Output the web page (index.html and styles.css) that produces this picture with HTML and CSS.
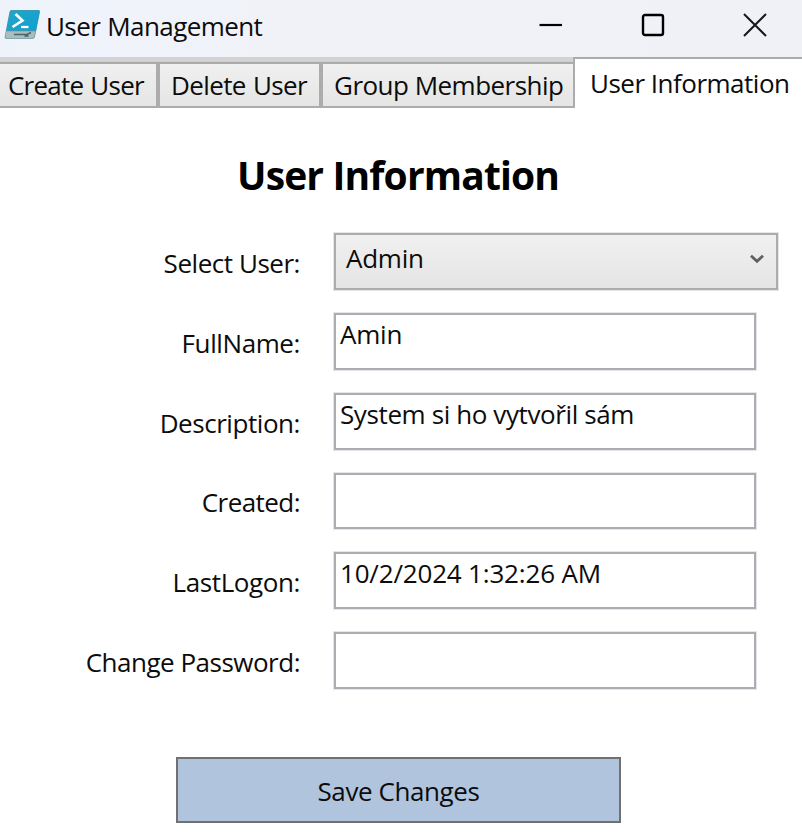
FILE: index.html
```
<!DOCTYPE html>
<html lang="en">
<head>
<meta charset="utf-8">
<title>User Management</title>
<link rel="stylesheet" href="styles.css">
</head>
<body>
<div class="window">
  <header class="titlebar">
    <svg class="app-icon" width="38" height="32" viewBox="0 0 38 32">
      <defs>
        <linearGradient id="screen" x1="0" y1="0" x2="1" y2="1">
          <stop offset="0" stop-color="#22a6c8"/>
          <stop offset="1" stop-color="#0fa0d2"/>
        </linearGradient>
      </defs>
      <path d="M7.5 1H34.5Q36.3 1 36 2.8L31 27.5Q30.5 29.8 28.5 29.8H2.3Q.3 29.8 .7 27.8L5.5 2.8Q5.8 1 7.5 1Z" fill="#5f9097"/>
      <path d="M7.7 1.5H34.4Q35.8 1.5 35.5 3L32 21.5H2.500L6 3Q6.300 1.500 7.700 1.500Z" fill="url(#screen)"/>
      <path d="M2.300 22.300H31.500L30.500 27Q30 29 28.200 29H2.800Q1 29 1.300 27.300Z" fill="#a9bcbf"/>
      <path d="M11.500 5L18.500 11.500L8.500 18" fill="none" stroke="#fff" stroke-width="2.600"/>
      <path d="M17 18H24.500" stroke="#fff" stroke-width="2.300"/>
      <path d="M10 25.500H23L27 23.500M20.500 26.800H24.500" fill="none" stroke="#4e6468" stroke-width="1.700"/>
    </svg>
    <h1 class="caption">User Management</h1>
    <div class="controls">
      <svg width="24" height="24" viewBox="0 0 24 24"><path d="M.5 12H23" stroke="#000" stroke-width="2.200"/></svg>
      <svg width="24" height="24" viewBox="0 0 24 24"><rect x="2" y="2" width="20" height="20" rx="2" fill="none" stroke="#000" stroke-width="2.400"/></svg>
      <svg width="24" height="24" viewBox="0 0 24 24"><path d="M1 1L23 23M23 1L1 23" stroke="#16161c" stroke-width="2"/></svg>
    </div>
  </header>
  <nav class="tabs">
    <div class="tab create">Create User</div>
    <div class="tab delete">Delete User</div>
    <div class="tab group">Group Membership</div>
    <div class="tab active">User Information</div>
  </nav>
  <main class="panel">
    <h2 class="heading">User Information</h2>
    <form class="form">
      <div class="row">
        <span class="label select-label">Select User:</span>
        <div class="combo"><span class="admin">Admin</span>
          <svg width="16" height="12" viewBox="0 0 16 12"><path d="M2 2.700L8 8.300L14 2.700" fill="none" stroke="#606060" stroke-width="2.800"/></svg>
        </div>
      </div>
      <div class="row">
        <span class="label fullname">FullName:</span>
        <div class="box amin">Amin</div>
      </div>
      <div class="row">
        <span class="label description">Description:</span>
        <div class="box system">System si ho vytvořil sám</div>
      </div>
      <div class="row short">
        <span class="label created">Created:</span>
        <div class="box"></div>
      </div>
      <div class="row">
        <span class="label lastlogon">LastLogon:</span>
        <div class="box date">10/2/2024 1:32:26 AM</div>
      </div>
      <div class="row">
        <span class="label password">Change Password:</span>
        <div class="box"></div>
      </div>
    </form>
    <div class="save">Save Changes</div>
  </main>
</div>
</body>
</html>
```
FILE: styles.css
```
* { box-sizing: border-box; }
body {
  margin: 0;
  background: #fff;
  color: #0c0c0c;
  font: 26px/36px "Open Sans", "Noto Sans", sans-serif;
  white-space: nowrap;
}
.window { width: 802px; height: 840px; overflow: hidden; display: flex; flex-direction: column; }
.titlebar {
  height: 57px;
  display: flex;
  align-items: flex-start;
  background: linear-gradient(90deg, #eef3fb, #f1f2f8 40%, #f0f1f7);
}
.app-icon { margin: 9px 0 0 4px; }
.caption { margin: 8px 0 0 4px; font-size: 26px; font-weight: 400; letter-spacing: -.6px; word-spacing: 1px; }
.controls { margin: 13px 35px 0 auto; width: 228px; display: flex; justify-content: space-between; }
.controls svg:nth-child(2) { margin-right: 1px; }
.tabs { height: 51px; display: flex; align-items: flex-end; background: linear-gradient(#d3d3d3 4px, #c8c8c8 5px); }
.tab {
  height: 46px;
  padding-top: 3px;
  border: 2px solid #acacac;
  background: linear-gradient(#f0f0f0, #e5e5e5);
}
.create { width: 158px; padding-left: 8px; border-left: 0; letter-spacing: -.76px; word-spacing: 1px; }
.delete { width: 163px; padding-left: 11px; letter-spacing: -.62px; word-spacing: 1px; }
.group { width: 252px; padding-left: 11px; border-right: 0; letter-spacing: -.52px; }
.active {
  flex: 1;
  height: 51px;
  padding: 6px 0 0 15px;
  border-right: 0;
  border-bottom: 0;
  background: #fff;
  letter-spacing: -.5px;
}
.panel { flex: 1; }
.heading {
  margin: 41px 0 0 237px;
  font-size: 39px;
  line-height: 52px;
  letter-spacing: -.85px;
  color: #000;
}
.form { display: grid; gap: 23px; margin: 32px 0 0; }
.row { display: flex; height: 57px; }
.row.short { height: 56px; }
.label { width: 300px; margin-right: 34px; padding-top: 12px; text-align: right; }
.select-label { letter-spacing: -.46px; }
.fullname { letter-spacing: -.4px; }
.description { letter-spacing: -.44px; }
.created { padding-top: 11px; letter-spacing: -.55px; }
.lastlogon { letter-spacing: -.4px; }
.password { letter-spacing: -.49px; }
.combo, .box { border: 2px solid #acacac; box-shadow: 0 0 0 1px #e6e6e8; }
.combo {
  width: 444px;
  display: flex;
  justify-content: space-between;
  padding: 5px 11px 0 10px;
  background: linear-gradient(#f0f0f0, #e5e5e5);
}
.combo svg { margin-top: 13px; }
.admin { letter-spacing: -.25px; }
.box { width: 422px; padding: 1px 0 0 4px; border-color: #abadb3; }
.amin { letter-spacing: -.2px; }
.system { letter-spacing: -.39px; }
.date { letter-spacing: -.18px; }
.save {
  width: 445px;
  height: 66px;
  margin: 68px 0 0 176px;
  padding-top: 14px;
  border: 2px solid #707070;
  background: #b0c4de;
  text-align: center;
  letter-spacing: -.41px;
}
```
